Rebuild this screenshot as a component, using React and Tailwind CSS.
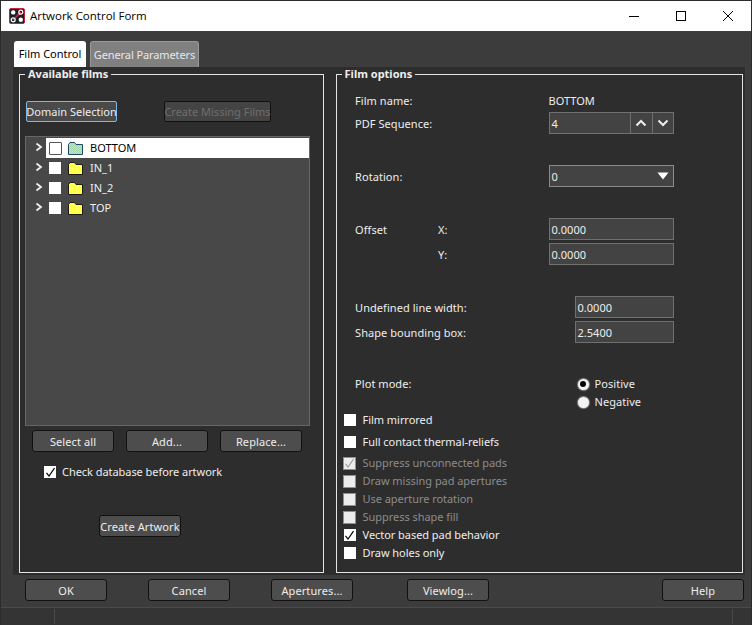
const FONT = "font-['Noto_Sans',sans-serif]";

function Logo() {
  return (
    <svg width="16" height="16" viewBox="0 0 16 16" className="ml-[8px] shrink-0">
      <rect x="0.5" y="0.5" width="15" height="15" rx="1.5" fill="#1b1f26" stroke="#c8203c" />
      <path d="M4 12 L12 4" stroke="#d8203c" strokeWidth="1.6" />
      <circle cx="4.2" cy="4.4" r="2.2" fill="#fff" />
      <circle cx="11.8" cy="4.2" r="2" fill="none" stroke="#fff" strokeWidth="1.2" />
      <circle cx="4.2" cy="11.8" r="2" fill="none" stroke="#fff" strokeWidth="1.2" />
      <circle cx="11.8" cy="11.8" r="2.2" fill="#fff" />
    </svg>
  );
}

function Btn({ children, className = "" }) {
  return (
    <button className={`h-[22px] w-[82px] shrink-0 rounded-[3px] border border-[#111] bg-[#4d4d4d] text-[11px] text-[#eee] flex items-center justify-center whitespace-nowrap pt-[2px] tracking-[0.1px] ${className}`}>
      {children}
    </button>
  );
}

function Check({ checked, disabled }) {
  return (
    <span className={`shrink-0 flex items-center justify-center ${disabled ? "w-[13px] h-[13px] -ml-px bg-[#ececec] border border-[#8f8f8f]" : "w-[12px] h-[12px] bg-white"}`}>
      {checked && (
        <svg width="11" height="11" viewBox="0 0 11 11">
          <path d="M1.5 5.8 L4 9 L9.5 1.2" fill="none" stroke={disabled ? "#a0a0a0" : "#000"} strokeWidth="1.2" />
        </svg>
      )}
    </span>
  );
}

function CheckRow({ label, checked, disabled, className = "", gap = "gap-[7px]" }) {
  return (
    <div className={`h-[18px] flex items-center ${gap} ${className}`}>
      <Check checked={checked} disabled={disabled} />
      <span className={`text-[11px] tracking-[-0.05px] ${disabled ? "text-[#8c8c8c]" : "text-[#eee]"}`}>{label}</span>
    </div>
  );
}

function Folder({ blue, id }) {
  return (
    <svg width="16" height="14" viewBox="0 0 16 14" className="shrink-0">
      <defs>
        <pattern id={id} width="2" height="2" patternUnits="userSpaceOnUse">
          <rect width="2" height="2" fill={blue ? "#a6d4ae" : "#ffff4d"} />
          <rect width="1" height="1" fill={blue ? "#c8dcec" : "#f4f4d0"} />
          <rect x="1" y="1" width="1" height="1" fill={blue ? "#c8dcec" : "#f4f4d0"} />
        </pattern>
      </defs>
      <path
        d="M0.5 3.5 L2 1.5 H6.5 L8 3.5 H14.5 V13.5 H0.5 Z"
        fill={`url(#${id})`}
        stroke={blue ? "#1f4a66" : "#1a1a10"}
        strokeWidth="1"
      />
    </svg>
  );
}

function TreeRow({ name, selected }) {
  return (
    <div className="h-[20px] flex items-center">
      <svg width="8" height="10" viewBox="0 0 8 10" className="ml-[9px] mb-[2px] shrink-0">
        <path d="M1.5 1.5 L6 5 L1.5 8.5" fill="none" stroke="#eee" strokeWidth="1.8" />
      </svg>
      <div className={`flex-1 h-[20px] ml-[3px] flex items-center pl-[3px] ${selected ? "bg-white text-black" : "text-[#eee]"}`}>
        {selected ? (
          <span className="w-[13px] h-[13px] shrink-0 bg-white border border-[#555] rounded-[1px]" />
        ) : (
          <span className="w-[12px] h-[12px] shrink-0 bg-white" />
        )}
        <span className={selected ? "ml-[6px]" : "ml-[7px]"}><Folder blue={selected} id={`f-${name}`} /></span>
        <span className="ml-[6px] text-[11px]">{name}</span>
      </div>
    </div>
  );
}

function Field({ value, className = "w-[125px]" }) {
  return (
    <div className={`h-[22px] border border-[#707070] bg-[#434343] text-[11px] text-[#eee] flex items-center pl-[2px] pt-[2px] ${className}`}>
      {value}
    </div>
  );
}

function Label({ children, className = "" }) {
  return <span className={`text-[11px] text-[#eee] tracking-[0.05px] ${className}`}>{children}</span>;
}

function Group({ title, className = "", children }) {
  return (
    <fieldset className={`border border-[#e4e4e4] ${className}`}>
      <legend className="ml-[5px] px-[3px] h-[14px] leading-[14px] text-[11px] font-bold text-[#eee]">{title}</legend>
      {children}
    </fieldset>
  );
}

export default function App() {
  return (
    <div className={`w-[752px] h-[625px] bg-[#2c2c2c] pt-px pl-px pr-px flex flex-col overflow-hidden ${FONT}`}>
      <div className="h-[30px] bg-white flex items-center shrink-0">
        <Logo />
        <span className="ml-[5px] text-[11.5px] text-black font-['Open_Sans',sans-serif]">Artwork Control Form</span>
        <div className="ml-auto flex items-center">
          <svg width="12" height="12" viewBox="0 0 12 12" className="mr-[35px]"><path d="M1 6.5 H11" stroke="#000" /></svg>
          <svg width="12" height="12" viewBox="0 0 12 12" className="mr-[35px]"><rect x="1.5" y="1.5" width="9" height="9" fill="none" stroke="#000" /></svg>
          <svg width="12" height="12" viewBox="0 0 12 12" className="mr-[17px]"><path d="M1 1 L11 11 M11 1 L1 11" stroke="#000" /></svg>
        </div>
      </div>

      <div className="flex-1 bg-[#3c3c3c] flex flex-col">
        <div className="h-[36px] flex items-end pl-[13px] gap-[4px] shrink-0">
          <div className="w-[72px] h-[26px] bg-white rounded-t-[3px] text-[11px] text-black flex items-center justify-center whitespace-nowrap pt-px">Film Control</div>
          <div className="w-[109px] h-[26px] bg-[#808080] border border-[#999] border-b-0 rounded-t-[3px] text-[11px] text-[#e8e8e8] flex items-center justify-center whitespace-nowrap tracking-[-0.1px] pt-px">General Parameters</div>
        </div>

        <div className="h-[508px] ml-[12px] w-[732px] bg-[#2d2d2d] flex shrink-0 pl-[6px] pr-[2px] gap-[12px]">
          <Group title="Available films" className="w-[305px] h-[506px]">
            <div className="mt-[20px] flex pl-[6px]">
              <button className="w-[91px] h-[21px] rounded-[2px] border border-[#7ab8e8] bg-[#4a4a4a] text-[11px] text-[#eee] whitespace-nowrap flex items-center justify-center pt-px">Domain Selection</button>
              <button className="ml-[47px] w-[107px] h-[21px] rounded-[2px] border border-[#111] bg-[#444] text-[11px] text-[#6e6e6e] whitespace-nowrap flex items-center justify-center pt-px">Create Missing Films</button>
            </div>
            <div className="mt-[14px] ml-[5px] w-[285px] h-[290px] border border-[#666] bg-[#484848] pt-px">
              <TreeRow name="BOTTOM" selected />
              <TreeRow name="IN_1" />
              <TreeRow name="IN_2" />
              <TreeRow name="TOP" />
            </div>
            <div className="mt-[4px] ml-[12px] flex gap-[12px]">
              <Btn>Select all</Btn>
              <Btn>Add...</Btn>
              <Btn>Replace...</Btn>
            </div>
            <CheckRow label="Check database before artwork" checked className="mt-[11px] ml-[24px]" gap="gap-[6px]" />
            <div className="mt-[34px] ml-[79px]"><Btn>Create Artwork</Btn></div>
          </Group>

          <Group title="Film options" className="w-[408px] h-[506px]">
            <div className="pl-[18.5px] mt-[9px]">
              <div className="h-[22px] flex items-center"><Label className="w-[193.5px]">Film name:</Label><span className="text-[11px] text-[#eee]">BOTTOM</span></div>
              <div className="h-[22px] flex items-center">
                <Label className="w-[193.5px] pt-[2px]">PDF Sequence:</Label>
                <div className="flex h-[22px] w-[125px] border border-[#707070] bg-[#434343] text-[11px] text-[#eee]">
                  <span className="flex-1 pl-[2px] flex items-center pt-[2px]">4</span>
                  <span className="w-[22px] border-l border-[#707070] flex items-center justify-center">
                    <svg width="12" height="8" viewBox="0 0 12 8"><path d="M1.5 6.5 L6 2 L10.5 6.5" fill="none" stroke="#eee" strokeWidth="2" /></svg>
                  </span>
                  <span className="w-[21px] border-l border-[#707070] flex items-center justify-center">
                    <svg width="12" height="8" viewBox="0 0 12 8"><path d="M1.5 1.5 L6 6 L10.5 1.5" fill="none" stroke="#eee" strokeWidth="2" /></svg>
                  </span>
                </div>
              </div>
              <div className="mt-[31px] h-[22px] flex items-center">
                <Label className="w-[193.5px] pt-[2px]">Rotation:</Label>
                <div className="h-[22px] w-[125px] border border-[#8a8a8a] bg-[#434343] text-[11px] text-[#eee] flex items-center justify-between pl-[2px] pr-[4px]">
                  <span className="pt-[2px]">0</span>
                  <svg width="12" height="8" viewBox="0 0 12 8"><path d="M0.5 0.5 H11.5 L6 7.5 Z" fill="#fff" /></svg>
                </div>
              </div>
              <div className="mt-[31px] h-[22px] flex items-center">
                <Label className="w-[83px] pt-[2px]">Offset</Label>
                <Label className="w-[110.5px] text-[10px] pt-[2px]">X:</Label>
                <Field value="0.0000" />
              </div>
              <div className="mt-[3px] h-[22px] flex items-center">
                <Label className="ml-[83px] w-[110.5px] text-[10px] pt-[2px]">Y:</Label>
                <Field value="0.0000" />
              </div>
              <div className="mt-[31px] h-[22px] flex items-center">
                <Label className="w-[219.5px] pt-[2px]">Undefined line width:</Label>
                <Field value="0.0000" className="w-[99px]" />
              </div>
              <div className="mt-[3px] h-[22px] flex items-center">
                <Label className="w-[219.5px] pt-[2px]">Shape bounding box:</Label>
                <Field value="2.5400" className="w-[99px]" />
              </div>
              <div className="mt-[32px] h-[18px] flex items-center">
                <Label className="w-[222.5px]">Plot mode:</Label>
                <span className="w-[11px] h-[11px] rounded-full bg-[#f4f4f4] shadow-[0_0_1px_1px_#888] flex items-center justify-center"><span className="w-[6px] h-[6px] rounded-full bg-black" /></span>
                <Label className="ml-[6px]">Positive</Label>
              </div>
              <div className="h-[18px] flex items-center">
                <span className="ml-[222.5px] w-[11px] h-[11px] rounded-full bg-[#f4f4f4] shadow-[0_0_1px_1px_#888]" />
                <Label className="ml-[6px]">Negative</Label>
              </div>
            </div>
            <div className="pl-[7px]">
              <CheckRow label="Film mirrored" />
              <CheckRow label="Full contact thermal-reliefs" className="mt-[4px]" />
              <CheckRow label="Suppress unconnected pads" checked disabled className="mt-[3px]" />
              <CheckRow label="Draw missing pad apertures" disabled />
              <CheckRow label="Use aperture rotation" disabled />
              <CheckRow label="Suppress shape fill" disabled />
              <CheckRow label="Vector based pad behavior" checked />
              <CheckRow label="Draw holes only" />
            </div>
          </Group>
        </div>

        <div className="mt-[4px] flex pl-[24px] shrink-0">
          <Btn>OK</Btn>
          <Btn className="ml-[41px]">Cancel</Btn>
          <Btn className="ml-[41px]">Apertures...</Btn>
          <Btn className="ml-[54px]">Viewlog...</Btn>
          <Btn className="ml-[173px]">Help</Btn>
        </div>

        <div className="mt-[6px] flex-1 border-t border-[#4a4a4a] bg-[#343434] flex">
          <div className="ml-[53px] my-[1px] w-px bg-[#4a4a4a]" />
          <div className="ml-auto mr-[18px] my-[1px] w-px bg-[#4a4a4a]" />
        </div>
      </div>
    </div>
  );
}
